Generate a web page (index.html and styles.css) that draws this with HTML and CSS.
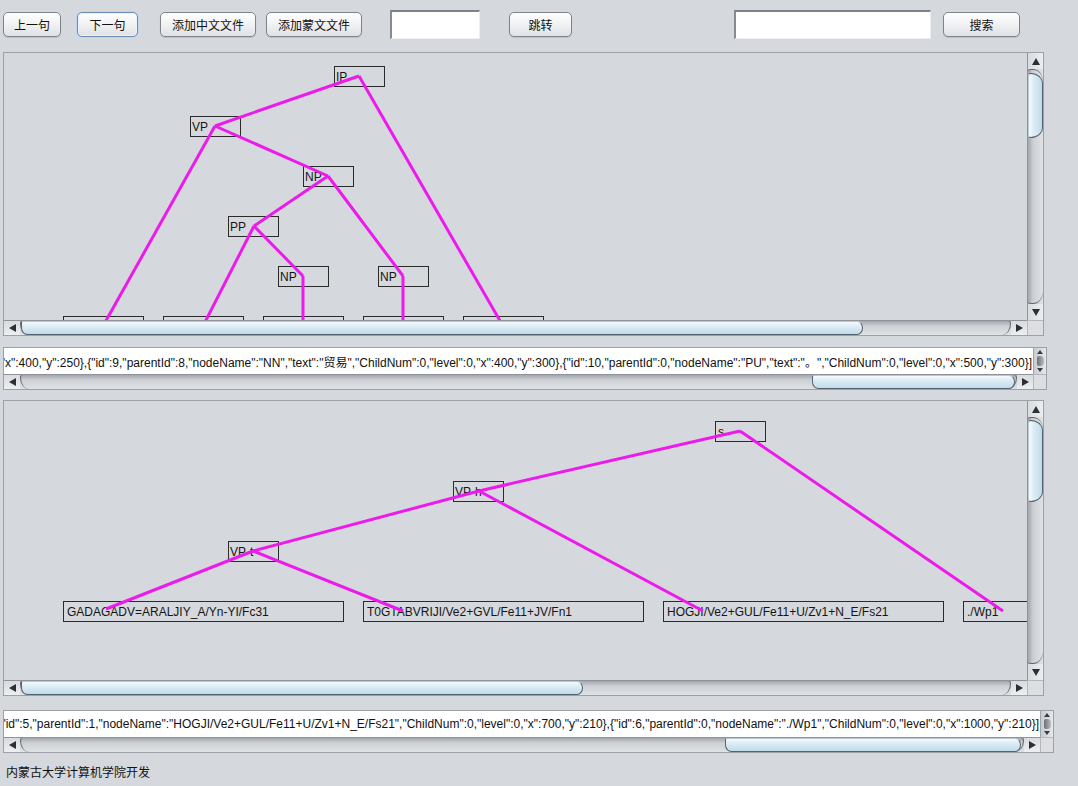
FILE: index.html
```html
<!DOCTYPE html>
<html>
<head>
<meta charset="utf-8">
<link rel="stylesheet" href="styles.css">
</head>
<body>
<div class="app">
  <div class="toolbar">
    <button class="btn btn-prev">上一句</button>
    <button class="btn btn-next">下一句</button>
    <button class="btn btn-addzh">添加中文文件</button>
    <button class="btn btn-addmn">添加蒙文文件</button>
    <div class="field field-jump"></div>
    <button class="btn btn-jump">跳转</button>
    <div class="field field-search"></div>
    <button class="btn btn-search">搜索</button>
  </div>

  <div class="tree-pane pane-top">
    <div class="viewport">
      <svg class="tree" viewBox="4 53 1023 267" width="1023" height="267">
        <g class="boxes">
          <rect x="334.5" y="66.5" width="50" height="20"/>
          <rect x="190.5" y="116.5" width="50" height="20"/>
          <rect x="303.5" y="166.5" width="50" height="20"/>
          <rect x="228.5" y="216.5" width="50" height="20"/>
          <rect x="278.5" y="266.5" width="50" height="20"/>
          <rect x="378.5" y="266.5" width="50" height="20"/>
          <rect x="63.5" y="316.5" width="80" height="20"/>
          <rect x="163.5" y="316.5" width="80" height="20"/>
          <rect x="263.5" y="316.5" width="80" height="20"/>
          <rect x="363.5" y="316.5" width="80" height="20"/>
          <rect x="463.5" y="316.5" width="80" height="20"/>
        </g>
        <g class="labels">
          <text x="336" y="81">IP</text>
          <text x="192" y="131">VP</text>
          <text x="305" y="181">NP</text>
          <text x="230" y="231">PP</text>
          <text x="280" y="281">NP</text>
          <text x="380" y="281">NP</text>
        </g>
        <g class="edges">
          <line x1="359" y1="76" x2="215" y2="126"/>
          <line x1="359" y1="76" x2="503" y2="326"/>
          <line x1="215" y1="126" x2="103" y2="326"/>
          <line x1="215" y1="126" x2="328" y2="176"/>
          <line x1="328" y1="176" x2="254" y2="226"/>
          <line x1="328" y1="176" x2="403" y2="276"/>
          <line x1="254" y1="226" x2="203" y2="326"/>
          <line x1="254" y1="226" x2="303" y2="276"/>
          <polyline points="303,276 303,326"/>
          <polyline points="403,276 403,326"/>
        </g>
      </svg>
    </div>
    <div class="vbar">
      <div class="arrow-btn"><span class="tri tri-up"></span></div>
      <div class="vtrack"><div class="vthumb" style="top:3px;height:65px"></div></div>
      <div class="arrow-btn"><span class="tri tri-down"></span></div>
    </div>
    <div class="hbar">
      <div class="arrow-btn"><span class="tri tri-left"></span></div>
      <div class="htrack"><div class="hthumb" style="left:0;width:842px"></div></div>
      <div class="arrow-btn"><span class="tri tri-right"></span></div>
    </div>
    <div class="corner"></div>
  </div>

  <div class="text-pane tp1">
    <div class="text-view"><span class="json">[{"id":1,"parentId":0,"nodeName":"IP","text":"","ChildNum":2,"level":5,"x":350,"y":0},{"id":2,"parentId":1,"nodeName":"VP","text":"","ChildNum":2,"level":4,"x":200,"y":50},{"id":8,"parentId":6,"nodeName":"NP","text":"","ChildNum":1,"level":1,"x":400,"y":250},{"id":9,"parentId":8,"nodeName":"NN","text":"贸易","ChildNum":0,"level":0,"x":400,"y":300},{"id":10,"parentId":0,"nodeName":"PU","text":"。","ChildNum":0,"level":0,"x":500,"y":300}]</span></div>
    <div class="vmini">
      <span class="tri tri-up-s"></span>
      <span class="mini-thumb"></span>
      <span class="tri tri-down-s"></span>
    </div>
    <div class="hbar">
      <div class="arrow-btn"><span class="tri tri-left"></span></div>
      <div class="htrack"><div class="hthumb" style="left:791px;width:203px"></div></div>
      <div class="arrow-btn"><span class="tri tri-right"></span></div>
    </div>
    <div class="corner"></div>
  </div>

  <div class="tree-pane pane-bottom">
    <div class="viewport">
      <svg class="tree" viewBox="4 401 1023 280" width="1023" height="280">
        <g class="boxes">
          <rect x="715.5" y="421.5" width="50" height="20"/>
          <rect x="453.5" y="481.5" width="50" height="20"/>
          <rect x="228.5" y="541.5" width="50" height="20"/>
          <rect x="63.5" y="601.5" width="280" height="20"/>
          <rect x="363.5" y="601.5" width="280" height="20"/>
          <rect x="663.5" y="601.5" width="280" height="20"/>
          <rect x="963.5" y="601.5" width="280" height="20"/>
        </g>
        <g class="labels">
          <text x="718" y="436">s</text>
          <text x="455" y="496">VP-h</text>
          <text x="230" y="556">VP-t</text>
          <text x="67" y="616">GADAGADV=ARALJIY_A/Yn-YI/Fc31</text>
          <text x="367" y="616">T0GTABVRIJI/Ve2+GVL/Fe11+JV/Fn1</text>
          <text x="667" y="616">HOGJI/Ve2+GUL/Fe11+U/Zv1+N_E/Fs21</text>
          <text x="967" y="616">./Wp1</text>
        </g>
        <g class="edges">
          <line x1="740" y1="431" x2="479" y2="491"/>
          <line x1="740" y1="431" x2="1003" y2="611"/>
          <line x1="479" y1="491" x2="253" y2="551"/>
          <line x1="479" y1="491" x2="703" y2="611"/>
          <line x1="253" y1="551" x2="106" y2="609"/>
          <line x1="253" y1="551" x2="403" y2="611"/>
        </g>
      </svg>
    </div>
    <div class="vbar">
      <div class="arrow-btn"><span class="tri tri-up"></span></div>
      <div class="vtrack"><div class="vthumb" style="top:2px;height:82px"></div></div>
      <div class="arrow-btn"><span class="tri tri-down"></span></div>
    </div>
    <div class="hbar">
      <div class="arrow-btn"><span class="tri tri-left"></span></div>
      <div class="htrack"><div class="hthumb" style="left:0;width:562px"></div></div>
      <div class="arrow-btn"><span class="tri tri-right"></span></div>
    </div>
    <div class="corner"></div>
  </div>

  <div class="text-pane tp2">
    <div class="text-view"><span class="json">[{"id":1,"parentId":0,"nodeName":"s","ChildNum":2,"level":3,"x":750,"y":30},{"id":2,"parentId":1,"nodeName":"VP-h","ChildNum":2,"level":2,"x":500,"y":90},{"id":5,"parentId":1,"nodeName":"HOGJI/Ve2+GUL/Fe11+U/Zv1+N_E/Fs21","ChildNum":0,"level":0,"x":700,"y":210},{"id":6,"parentId":0,"nodeName":"./Wp1","ChildNum":0,"level":0,"x":1000,"y":210}]</span></div>
    <div class="vmini">
      <span class="tri tri-up-s"></span>
      <span class="mini-thumb"></span>
      <span class="tri tri-down-s"></span>
    </div>
    <div class="hbar">
      <div class="arrow-btn"><span class="tri tri-left"></span></div>
      <div class="htrack"><div class="hthumb" style="left:704px;width:296px"></div></div>
      <div class="arrow-btn"><span class="tri tri-right"></span></div>
    </div>
    <div class="corner"></div>
  </div>

  <div class="footer">内蒙古大学计算机学院开发</div>
</div>
</body>
</html>
```

FILE: styles.css
```css
* { box-sizing: border-box; }
html, body { margin: 0; padding: 0; }
body {
  background: #d5d8dd;
  font-family: "Liberation Sans", "Noto Sans CJK SC", sans-serif;
  width: 1078px;
  height: 786px;
  overflow: hidden;
  color: #111;
}
.app { display: flex; flex-direction: column; align-items: flex-start; }

/* toolbar */
.toolbar { display: flex; align-items: center; height: 49px; width: 100%; }
.btn {
  height: 25px;
  padding: 0;
  border: 1px solid #7f848a;
  border-radius: 5px;
  background: linear-gradient(#ffffff 0%, #f2f3f4 45%, #dfe1e4 100%);
  font-family: "Noto Sans CJK SC", sans-serif;
  font-size: 12px;
  color: #111;
  line-height: 23px;
  box-shadow: 0 1px 1px rgba(0,0,0,0.12);
}
.btn-next {
  border-color: #6d8cb1;
  box-shadow: 0 0 0 1px #c3d5e8, inset 0 0 0 1px #eaf2fa;
}
.btn-prev { margin-left: 3px; width: 58px; }
.btn-next { margin-left: 16px; width: 61px; }
.btn-addzh { margin-left: 22px; width: 96px; }
.btn-addmn { margin-left: 10px; width: 96px; }
.field-jump { margin-left: 28px; width: 90px; }
.btn-jump { margin-left: 29px; width: 63px; }
.field-search { margin-left: 162px; width: 197px; }
.btn-search { margin-left: 12px; width: 77px; }
.field {
  height: 29px;
  background: #fff;
  border-top: 2px solid #7e8288;
  border-left: 2px solid #878b91;
  border-right: 1px solid #eceef0;
  border-bottom: 1px solid #eceef0;
}

/* scroll panes */
.tree-pane, .text-pane {
  display: grid;
  margin-left: 3px;
  border: 1px solid #9da1a7;
}
.tree-pane { grid-template-columns: 1fr 16px; grid-template-rows: 1fr 15px; width: 1041px; }
.pane-top { margin-top: 3px; height: 284px; }
.pane-bottom { margin-top: 10px; height: 296px; }
.text-pane { grid-template-columns: 1fr 13px; grid-template-rows: 26px 15px; background: #d5d8dd; }
.tp1 { margin-top: 11px; width: 1044px; height: 43px; }
.tp2 { margin-top: 14px; width: 1051px; height: 43px; }

.viewport { overflow: hidden; background: #d5d8dd; }
.tree { display: block; }
.tree rect { fill: none; stroke: #2b2b2b; stroke-width: 1; }
.tree text { font-family: "Liberation Sans", sans-serif; font-size: 12px; fill: #151515; }
.tree line, .tree polyline { stroke: #ec1bec; stroke-width: 3; fill: none; }

.text-view {
  background: #fff;
  overflow: hidden;
  display: flex;
  justify-content: flex-end;
  align-items: center;
  padding-right: 1px;
  white-space: nowrap;
}
.json { font-family: "Liberation Sans", "Noto Sans CJK SC", sans-serif; font-size: 12px; color: #111; }

/* scrollbars */
.hbar { display: flex; height: 15px; background: linear-gradient(#a3a7ad 0%, #cdd0d4 35%, #e0e2e5 100%); border-top: 1px solid #8f9399; }
.vbar { display: flex; flex-direction: column; background: linear-gradient(to right, #a3a7ad 0%, #cdd0d4 35%, #e0e2e5 100%); border-left: 1px solid #8f9399; }
.arrow-btn { flex: 0 0 16px; display: flex; align-items: center; justify-content: center; }
.hbar .arrow-btn { background: linear-gradient(#d9dcdf, #eceef0); }
.vbar .arrow-btn { background: linear-gradient(to right, #d9dcdf, #eceef0); }
.htrack { flex: 1; position: relative; border-left: 1px solid #5f666d; border-right: 1px solid #5f666d; border-radius: 3px 3px 10px 10px / 3px 3px 12px 12px; }
.vtrack { flex: 1; position: relative; border-top: 1px solid #5f666d; border-bottom: 1px solid #5f666d; border-radius: 3px 10px 10px 3px / 3px 12px 12px 3px; }
.hthumb {
  position: absolute; top: 0; bottom: 0;
  background: linear-gradient(#f7fbfd 0%, #e0eef6 30%, #c0dbea 100%);
  border: 1px solid #56646f;
  border-top-color: #b8c8d2;
  border-radius: 4px 12px 12px 13px / 3px 14px 14px 14px;
}
.vthumb {
  position: absolute; left: 0; right: 0;
  background: linear-gradient(to right, #f7fbfd 0%, #e0eef6 30%, #c0dbea 100%);
  border: 1px solid #56646f;
  border-left-color: #b8c8d2;
  border-radius: 3px 14px 14px 3px / 4px 12px 12px 4px;
}
.corner { background: #dcdee2; border-left: 1px solid #b4b8bd; border-top: 1px solid #b4b8bd; }

.tri { display: block; width: 0; height: 0; }
.tri-left { border-top: 4px solid transparent; border-bottom: 4px solid transparent; border-right: 7px solid #2d2f33; }
.tri-right { border-top: 4px solid transparent; border-bottom: 4px solid transparent; border-left: 7px solid #2d2f33; }
.tri-up { border-left: 4px solid transparent; border-right: 4px solid transparent; border-bottom: 7px solid #2d2f33; }
.tri-down { border-left: 4px solid transparent; border-right: 4px solid transparent; border-top: 7px solid #2d2f33; }

.vmini {
  display: flex; flex-direction: column; align-items: center; justify-content: space-between;
  padding: 2px 0;
  background: linear-gradient(to right, #c9ccd0, #e6e8ea);
  border-left: 1px solid #a0a4a9;
}
.tri-up-s { border-left: 3px solid transparent; border-right: 3px solid transparent; border-bottom: 4px solid #3a3c40; }
.tri-down-s { border-left: 3px solid transparent; border-right: 3px solid transparent; border-top: 4px solid #3a3c40; }
.mini-thumb { display: block; width: 7px; height: 10px; border-radius: 2px 4px 4px 2px; background: linear-gradient(to right, #6b7077, #b9bdc2); }

.footer {
  margin-top: 12px;
  padding-left: 6px;
  font-family: "Noto Sans CJK SC", sans-serif;
  font-size: 12px;
  line-height: 14px;
  color: #111;
}
```
